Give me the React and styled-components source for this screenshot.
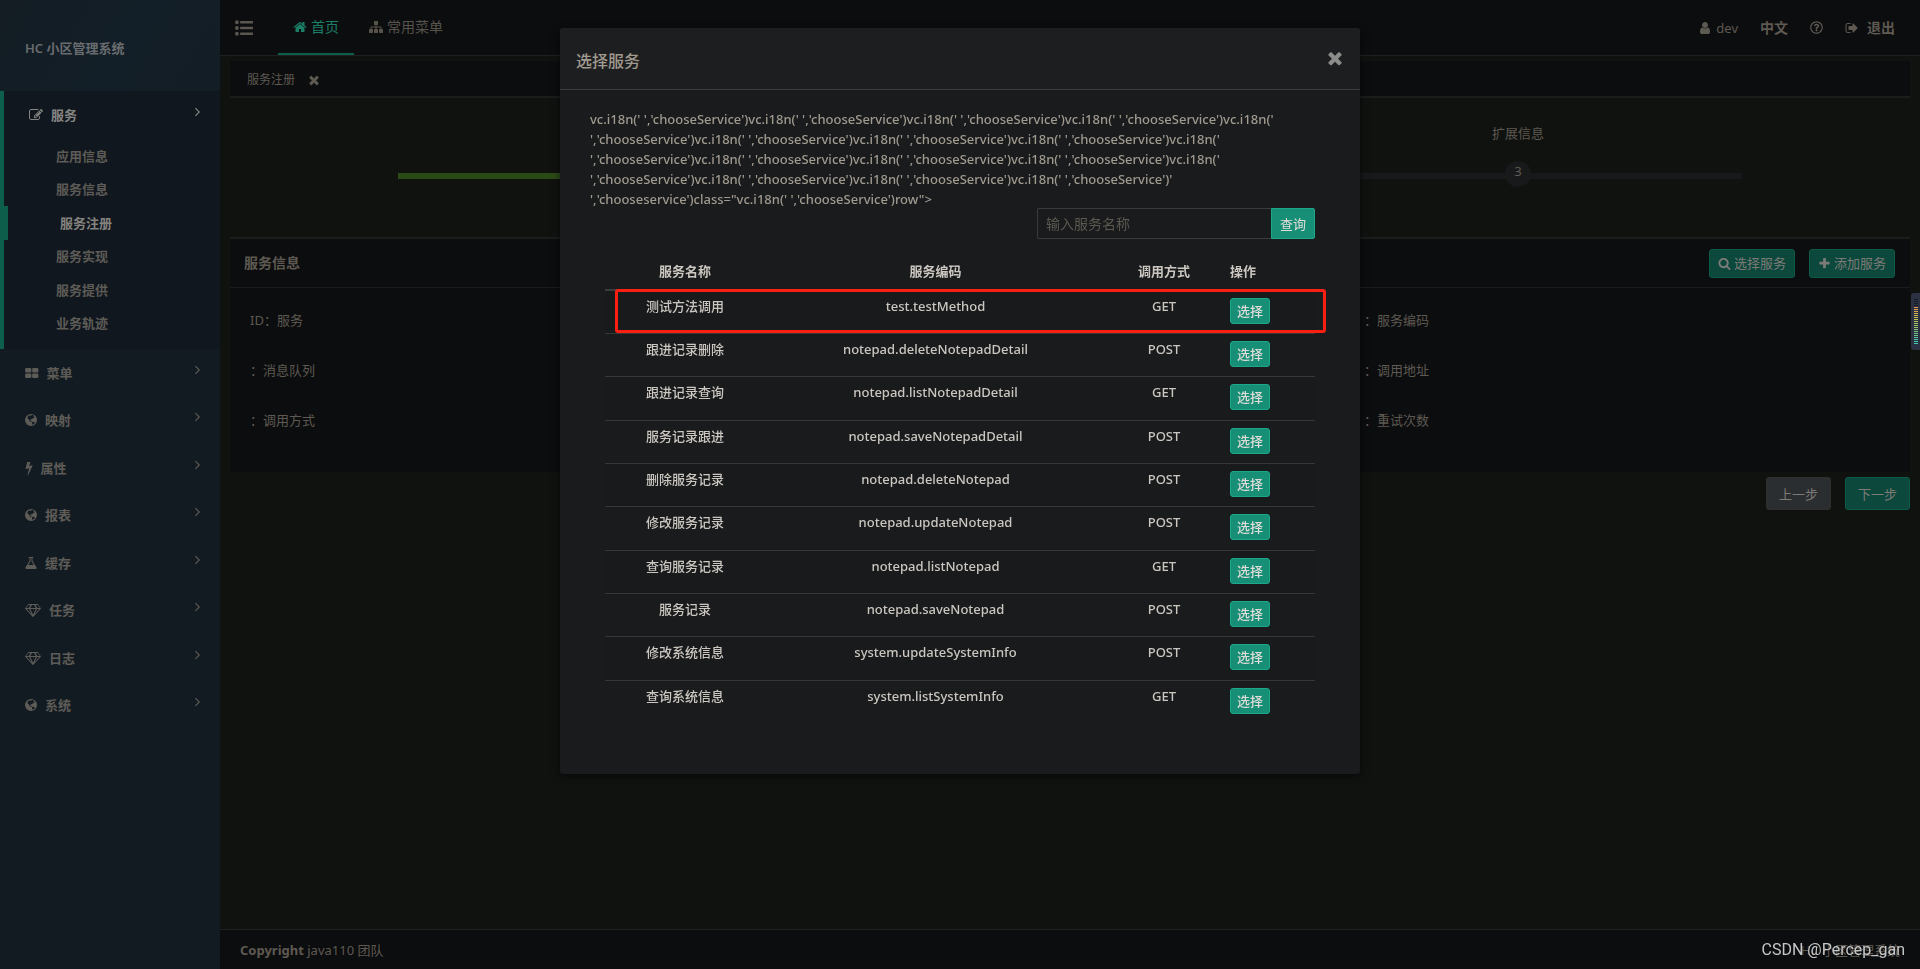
import React from "react";
import styled, { createGlobalStyle, css } from "styled-components";
import { FaRegQuestionCircle } from "react-icons/fa";

const Global = createGlobalStyle`
  *, *::before, *::after { box-sizing: border-box; }
  body {
    margin: 0;
    background: #101210;
    color: #5e5951;
    font: 13px/20px "Noto Sans", "Noto Sans CJK SC", sans-serif;
  }
  button, input { font: inherit; margin: 0; }
  a { color: inherit; text-decoration: none; }
  ul { list-style: none; margin: 0; padding: 0; }
  h1, h2, p { margin: 0; }
`;

const PATHS = {
  home: "M1472 992v480q0 26-19 45t-45 19h-384v-384h-256v384h-384q-26 0-45-19t-19-45v-480q0-1 .5-3t.5-3l575-474 575 474q1 2 1 6zm223-69l-62 74q-8 9-21 11h-3q-13 0-21-7l-692-577-692 577q-12 8-24 7-13-2-21-11l-62-74q-8-10-7-23.5t11-21.5l719-599q32-26 76-26t76 26l244 204v-195q0-14 9-23t23-9h192q14 0 23 9t9 23v408l219 182q10 8 11 21.5t-7 23.5z",
  plus: "M1600 736v192q0 40-28 68t-68 28h-416v416q0 40-28 68t-68 28h-192q-40 0-68-28t-28-68v-416h-416q-40 0-68-28t-28-68v-192q0-40 28-68t68-28h416v-416q0-40 28-68t68-28h192q40 0 68 28t28 68v416h416q40 0 68 28t28 68z",
  times: "M1490 1322q0 40-28 68l-136 136q-28 28-68 28t-68-28l-294-294-294 294q-28 28-68 28t-68-28l-136-136q-28-28-28-68t28-68l294-294-294-294q-28-28-28-68t28-68l136-136q28-28 68-28t68 28l294 294 294-294q28-28 68-28t68 28l136 136q28 28 28 68t-28 68l-294 294 294 294q28 28 28 68z",
  search: "M1216 832q0-185-131.5-316.5t-316.5-131.5-316.5 131.5-131.5 316.5 131.5 316.5 316.5 131.5 316.5-131.5 131.5-316.5zm512 832q0 52-38 90t-90 38q-54 0-90-38l-343-342q-179 124-399 124-143 0-273.5-55.5t-225-150-150-225-55.5-273.5 55.5-273.5 150-225 225-150 273.5-55.5 273.5 55.5 225 150 150 225 55.5 273.5q0 220-124 399l343 343q37 37 37 90z",
  user: "M1536 1399q0 109-62.5 187t-150.5 78h-854q-88 0-150.5-78t-62.5-187q0-85 8.5-160.5t31.5-152 58.5-131 94-89 134.5-34.5q131 128 313 128t313-128q76 0 134.5 34.5t94 89 58.5 131 31.5 152 8.5 160.5zm-256-887q0 159-112.5 271.5t-271.5 112.5-271.5-112.5-112.5-271.5 112.5-271.5 271.5-112.5 271.5 112.5 112.5 271.5z",
  signOut: "M704 1440q0 4 1 20t.5 26.5-3 23.5-10 19.5-20.5 6.5h-320q-119 0-203.5-84.5t-84.5-203.5v-704q0-119 84.5-203.5t203.5-84.5h320q13 0 22.5 9.5t9.5 22.5q0 4 1 20t.5 26.5-3 23.5-10 19.5-20.5 6.5h-320q-66 0-113 47t-47 113v704q0 66 47 113t113 47h312l11.5 1 11.5 3 8 5.5 7 9 2 13.5zm928-544q0 26-19 45l-544 544q-19 19-45 19t-45-19-19-45v-288h-448q-26 0-45-19t-19-45v-384q0-26 19-45t45-19h448v-288q0-26 19-45t45-19 45 19l544 544q19 19 19 45z",
  sitemap: "M1792 1248v320q0 40-28 68t-68 28h-320q-40 0-68-28t-28-68v-320q0-40 28-68t68-28h96v-192h-512v192h96q40 0 68 28t28 68v320q0 40-28 68t-68 28h-320q-40 0-68-28t-28-68v-320q0-40 28-68t68-28h96v-192h-512v192h96q40 0 68 28t28 68v320q0 40-28 68t-68 28h-320q-40 0-68-28t-28-68v-320q0-40 28-68t68-28h96v-192q0-52 38-90t90-38h512v-192h-96q-40 0-68-28t-28-68v-320q0-40 28-68t68-28h320q40 0 68 28t28 68v320q0 40-28 68t-68 28h-96v192h512q52 0 90 38t38 90v192h96q40 0 68 28t28 68z",
  edit: "M888 1184l116-116-152-152-116 116v56h96v96h56zm440-720q-16-16-33 1l-350 350q-17 17-1 33t33-1l350-350q17-17 1-33zm80 594v190q0 119-84.5 203.5t-203.5 84.5h-832q-119 0-203.5-84.5t-84.5-203.5v-832q0-119 84.5-203.5t203.5-84.5h832q63 0 117 25 15 7 18 23 3 17-9 29l-49 49q-14 14-32 8-23-6-45-6h-832q-66 0-113 47t-47 113v832q0 66 47 113t113 47h832q66 0 113-47t47-113v-126q0-13 9-22l64-64q15-15 35-7t20 29zm-96-738l288 288-672 672h-288v-288zm444 132l-92 92-288-288 92-92q28-28 68-28t68 28l152 152q28 28 28 68t-28 68z",
  list: "M0 320a192 192 0 1 0 384 0a192 192 0 1 0-384 0zM0 896a192 192 0 1 0 384 0a192 192 0 1 0-384 0zM0 1472a192 192 0 1 0 384 0a192 192 0 1 0-384 0zM512 190h1280v260h-1280zM512 766h1280v260h-1280zM512 1342h1280v260h-1280z",
  large: "M148 256h540q128 0 128 128v320q0 128-128 128h-540q-128 0-128-128v-320q0-128 128-128zM1044 256h540q128 0 128 128v320q0 128-128 128h-540q-128 0-128-128v-320q0-128 128-128zM148 960h540q128 0 128 128v320q0 128-128 128h-540q-128 0-128-128v-320q0-128 128-128zM1044 960h540q128 0 128 128v320q0 128-128 128h-540q-128 0-128-128v-320q0-128 128-128z",
  globe: "M768 128a768 768 0 1 0 0 1536a768 768 0 1 0 0-1536zM850 240L1010 260L1130 330L1060 400L1160 440L1230 560L1130 600L1010 680L930 760L850 770L790 850L680 820L620 880L700 930L690 1010L830 1040L870 1110L800 1140L640 1080L540 940L480 800L350 700L300 560L390 440L520 330L640 290L700 380L800 330zM960 1110L1180 1150L1270 1250L1200 1350L1060 1440L900 1510L930 1380L880 1250z",
  bolt: "M957 566q18 20 7 44l-540 1157q-13 25-42 25-4 0-14-2-17-5-25.500-19t-4.500-30l197-808-406 101q-4 1-12 1-18 0-31-11-18-15-13-39l201-825q4-14 16-23t28-9h328q19 0 32 12.500t13 29.500q0 8-5 18l-171 463 396-98q8-2 12-2 19 0 34 15z",
  flask: "M1463 1448q56 89 21.500 152.500t-140.500 63.500h-1152q-106 0-140.500-63.500t21.500-152.500l503-793v-399h-64q-26 0-45-19t-19-45 19-45 45-19h512q26 0 45 19t19 45-19 45-45 19h-64v399zm-779-725l-272 429h712l-272-429-20-31v-436h-128v436z",
  diamond: "M212 768l623 665-300-665h-323zM1024 1507l349-739h-698zM486 640l204-384h-262l-288 384zM1213 1433l623-665h-323zM675 640h698l-204-384h-290zM1562 640h346l-288-384h-262zM1645 152l384 512q14 18 13 41.500t-17 40.500l-960 1024q-17 20-41 20t-41-20l-960-1024q-16-17-17-40.500t13-41.500l384-512q18-24 51-24h1140q33 0 51 24z",
  angle: "M150 380L270 260L900 896L270 1532L150 1412L660 896z",
};
const WIDTHS = { globe: 1536, bolt: 970, flask: 1536, diamond: 2048, large: 1728, angle: 960 };

const Svg = styled.svg`
  display: inline-block;
  flex: none;
  fill: currentColor;
  height: ${(p) => p.$size}px;
`;

function Icon({ name, size = 14 }) {
  return (
    <Svg $size={size} viewBox={`0 0 ${WIDTHS[name] || 1792} 1792`} fillRule="evenodd" aria-hidden="true">
      <path d={PATHS[name]} />
    </Svg>
  );
}

const Page = styled.div`
  display: flex;
  min-height: 100vh;
`;

/* Sidebar */
const Sidebar = styled.nav`
  flex: 0 0 220px;
  background: #131b22;
  font-weight: 600;
`;
const Brand = styled.h1`
  height: 91px;
  padding: 38px 25px 0;
  background: linear-gradient(120deg, #131c23, #131f28 55%, #131d25);
  color: #696c6f;
  font-size: 13px;
  line-height: 20px;
  font-weight: 600;
`;
const Section = styled.div`
  padding-bottom: 9px;
  border-left: 4px solid #0e5e4c;
  background: #11171e;
`;
const MenuLink = styled.a`
  display: flex;
  align-items: center;
  gap: 8px;
  height: ${(p) => (p.$active ? "48px" : "100%")};
  padding: 0 20px 0 25px;
  color: ${(p) => (p.$active ? "#858583" : "#5e5c57")};

  span { flex: 1; }
  svg:last-child { margin-bottom: 6px; }
`;
const SubList = styled.ul`
  display: grid;
  grid-template-rows: repeat(6, 1fr);
  height: 201px;
`;
const SubLink = styled.a`
  display: flex;
  align-items: center;
  height: 100%;
  padding-left: 52px;
  color: #5d5b56;
  ${(p) =>
    p.$active &&
    css`
      border-left: 4px solid #0e5e4c;
      color: #85837e;
    `}
`;
const MenuList = styled.ul`
  display: grid;
  grid-template-rows: repeat(8, 1fr);
  height: 380px;
`;

/* Main column */
const Main = styled.div`
  flex: 1;
  min-width: 0;
  display: flex;
  flex-direction: column;
`;
const TopBar = styled.header`
  display: flex;
  height: 56px;
  background: #0c0d0f;
  border-bottom: 1px solid #1f2120;
`;
const MenuToggle = styled.button`
  width: 58px;
  padding: 0 0 0 15px;
  border: 0;
  background: none;
  color: #5a5650;
  text-align: left;
  line-height: 0;
`;
const TopTab = styled.a`
  display: flex;
  align-items: center;
  gap: 4px;
  padding: 0 15px;
  font-size: 14px;
  color: ${(p) => (p.$active ? "#1b7f68" : "#57534b")};
  border-bottom: 2px solid ${(p) => (p.$active ? "#0e5e4c" : "transparent")};
`;
const Account = styled.div`
  display: flex;
  align-items: center;
  margin-left: auto;
  padding-right: 25px;
  gap: 22px;
  a { display: flex; align-items: center; gap: ${(p) => p.$gap || 4}px; }
  strong { font-size: 14px; }
  svg + strong { padding-left: 4px; }
`;
const Content = styled.main`
  flex: 1;
  padding: 5px 10px 0;
`;
const OpenTabs = styled.div`
  display: flex;
  align-items: center;
  gap: 12px;
  height: 37px;
  padding: 2px 17px 0;
  background: #0c0d0f;
  border-bottom: 2px solid #1b1c1c;
  font-size: 12px;
`;
const PlainButton = styled.button`
  display: flex;
  padding: 0;
  border: 0;
  background: none;
  color: inherit;
`;
const Steps = styled.section`
  display: grid;
  grid-template-columns: 1fr 1fr 1fr;
  height: 139px;
  padding: 25px 168px 0;
  text-align: center;
`;
const Step = styled.div`
  display: flex;
  flex-direction: column;
  align-items: center;
  gap: 18px;
  background: linear-gradient(${(p) => (p.$done ? "#2a4b16, #2a4b16" : "#17191a, #17191a")}) 0 50px / 100% 6px no-repeat;

  b {
    width: 26px;
    height: 26px;
    border-radius: 50%;
    background: #17191a;
    font-weight: 400;
  }
`;
const Panel = styled.section`
  height: 235px;
  background: #0c0d0f;
  border-top: 2px solid #1b1c1c;
`;
const PanelHead = styled.header`
  display: flex;
  align-items: center;
  gap: 14px;
  height: 49px;
  padding: 0 15px 0 14px;
  border-bottom: 1px solid #1a1c1d;
  h2 { flex: 1; font-size: 14px; font-weight: 600; }
`;
const Button = styled.button`
  display: inline-flex;
  align-items: center;
  justify-content: center;
  gap: 3px;
  height: ${(p) => p.$height || 29}px;
  padding: 0 ${(p) => p.$pad || 8}px;
  border: 1px solid ${(p) => (p.$muted ? "#302f2d" : "#0e5a49")};
  border-radius: 3px;
  background: ${(p) => (p.$muted ? "#2b2e30" : "#0c483c")};
  color: #7c7b78;
  font-size: 13px;
  line-height: 18px;
  white-space: nowrap;
`;
const Fields = styled.div`
  display: grid;
  grid-template-columns: 1fr 1fr 1fr;
  grid-auto-rows: 50px;
  column-gap: 11px;
  padding: 22px 0 0 20px;
`;
const Actions = styled.div`
  display: flex;
  justify-content: flex-end;
  gap: 14px;
  padding-top: 5px;
`;
const Footer = styled.footer`
  display: flex;
  justify-content: space-between;
  height: 40px;
  padding: 10px 20px 0;
  background: #0c0d0f;
  border-top: 1px solid #1f2220;
`;

/* Dialog */
const Overlay = styled.div`
  position: fixed;
  inset: 0;
  display: flex;
  justify-content: center;
  align-items: flex-start;
  padding-top: 28px;
`;
const Dialog = styled.section`
  width: 800px;
  padding-bottom: 51px;
  border-radius: 3px;
  background: #1a1b1d;
  box-shadow: 0 2px 8px rgba(0, 0, 0, 0.6);
  color: #a09a8f;
`;
const DialogHead = styled.header`
  display: flex;
  justify-content: space-between;
  height: 62px;
  padding: 20px 15px 0 16px;
  background: #1d1e20;
  border-bottom: 1px solid #383c3e;
  border-radius: 3px 3px 0 0;
  h2 { font-size: 16px; line-height: 26px; font-weight: 500; }
`;
const CloseButton = styled(PlainButton)`
  height: 20px;
  color: #8b8b8a;
`;
const Message = styled.p`
  height: 118px;
  padding: 19px 30px 0;
  font-weight: 500;
  line-height: 20px;
  white-space: pre-line;
`;
const SearchRow = styled.form`
  display: flex;
  justify-content: flex-end;
  padding: 0 45px;
`;
const SearchInput = styled.input`
  width: 234px;
  height: 31px;
  padding: 0 8px;
  border: 1px solid #383c3e;
  border-right: 0;
  border-radius: 2px 0 0 2px;
  background: #1a1b1d;
  color: #a09a8f;
  font-size: 14px;
  &::placeholder { color: #5b5850; opacity: 1; }
`;
const Accent = styled(Button)`
  background: #178e76;
  border-color: #1aa98b;
  color: #e0ddd8;
`;
const SearchButton = styled(Accent)`
  border-radius: 0 2px 2px 0;
`;
const Table = styled.table`
  width: 710px;
  margin: 10px 45px 0;
  border-collapse: collapse;
  table-layout: fixed;
  color: #cbc7c0;

  th, td {
    padding: 5px 8px;
    text-align: center;
    vertical-align: top;
    font-weight: 500;
  }
  th { height: 41px; padding-top: 12px; font-weight: 600; border-bottom: 2px solid #383c3e; }
  td { height: 43px; border-top: 1px solid #343839; }
  tr:nth-child(3n) td { height: 44px; }
  th:last-child, td:last-child { text-align: left; }
  td:last-child { padding: 7px 8px 0; line-height: 0; }
  tbody tr:nth-child(odd) { background: #191a1c; }
`;
const Highlight = styled.div`
  position: absolute;
  top: 289px;
  left: 50%;
  width: 711px;
  height: 44px;
  margin-left: -345px;
  border: 3px solid #fb1e12;
  border-radius: 3px;
  pointer-events: none;
`;
const Gauge = styled.div`
  position: fixed;
  right: 0;
  top: 293px;
  width: 9px;
  height: 57px;
  padding: 6px 2px 6px 3px;
  background: #2b3042;
  border-radius: 3px 0 0 3px;
  div {
    height: 45px;
    background:
      repeating-linear-gradient(transparent 0 1px, #2b3042 1px 2px),
      linear-gradient(#161a26 0 8px, #e8964f 8px, #cfc24f 18px, #8fc66a 29px, #3cc8b4 45px);
  }
`;
const Watermark = styled.div`
  position: fixed;
  right: 15px;
  bottom: 9px;
  color: #c5c6c6;
  font: 16px/20px Roboto, sans-serif;
`;

const SUBMENU = ["应用信息", "服务信息", "服务注册", "服务实现", "服务提供", "业务轨迹"];
const MENU = [
  ["large", "菜单"],
  ["globe", "映射"],
  ["bolt", "属性"],
  ["globe", "报表"],
  ["flask", "缓存"],
  ["diamond", "任务"],
  ["diamond", "日志"],
  ["globe", "系统"],
];
const FIELDS = ["ID：服务", "", "：服务编码", "：消息队列", "", "：调用地址", "：调用方式", "", "：重试次数"];
const ROWS = [
  ["测试方法调用", "test.testMethod", "GET"],
  ["跟进记录删除", "notepad.deleteNotepadDetail", "POST"],
  ["跟进记录查询", "notepad.listNotepadDetail", "GET"],
  ["服务记录跟进", "notepad.saveNotepadDetail", "POST"],
  ["删除服务记录", "notepad.deleteNotepad", "POST"],
  ["修改服务记录", "notepad.updateNotepad", "POST"],
  ["查询服务记录", "notepad.listNotepad", "GET"],
  ["服务记录", "notepad.saveNotepad", "POST"],
  ["修改系统信息", "system.updateSystemInfo", "POST"],
  ["查询系统信息", "system.listSystemInfo", "GET"],
];
const OPEN = "vc.i18n('";
const CALL = OPEN + " ','chooseService')";
const TAIL = "','chooseService')";
const MESSAGE = [
  CALL.repeat(4) + OPEN,
  TAIL + CALL.repeat(3) + OPEN,
  TAIL + CALL.repeat(3) + OPEN,
  TAIL + CALL.repeat(3) + "'",
  `','chooseservice')class="${CALL}row">`,
].join("\n");

export default function App() {
  return (
    <>
      <Global />
      <Page>
        <Sidebar>
          <Brand>HC 小区管理系统</Brand>
          <Section>
            <MenuLink href="#" $active>
              <Icon name="edit" />
              <span>服务</span>
              <Icon name="angle" size={12} />
            </MenuLink>
            <SubList>
              {SUBMENU.map((label) => (
                <li key={label}>
                  <SubLink href="#" $active={label === "服务注册"}>{label}</SubLink>
                </li>
              ))}
            </SubList>
          </Section>
          <MenuList>
            {MENU.map(([icon, label]) => (
              <li key={label}>
                <MenuLink href="#">
                  <Icon name={icon} />
                  <span>{label}</span>
                  <Icon name="angle" size={12} />
                </MenuLink>
              </li>
            ))}
          </MenuList>
        </Sidebar>
        <Main>
          <TopBar>
            <MenuToggle aria-label="菜单"><Icon name="list" size={18} /></MenuToggle>
            <TopTab href="#" $active><Icon name="home" />首页</TopTab>
            <TopTab href="#"><Icon name="sitemap" />常用菜单</TopTab>
            <Account>
              <a href="#"><Icon name="user" />dev</a>
              <a href="#"><strong>中文</strong></a>
              <a href="#" aria-label="帮助"><FaRegQuestionCircle size={13} /></a>
              <a href="#"><Icon name="signOut" /><strong>退出</strong></a>
            </Account>
          </TopBar>
          <Content>
            <OpenTabs>
              服务注册
              <PlainButton aria-label="关闭标签"><Icon name="times" size={14} /></PlainButton>
            </OpenTabs>
            <Steps>
              <Step $done />
              <Step />
              <Step>扩展信息<b>3</b></Step>
            </Steps>
            <Panel>
              <PanelHead>
                <h2>服务信息</h2>
                <Button><Icon name="search" size={13} />选择服务</Button>
                <Button><Icon name="plus" size={13} />添加服务</Button>
              </PanelHead>
              <Fields>
                {FIELDS.map((label, i) => <div key={i}>{label}</div>)}
              </Fields>
            </Panel>
            <Actions>
              <Button $muted $height={33} $pad={12}>上一步</Button>
              <Button $height={33} $pad={12}>下一步</Button>
            </Actions>
          </Content>
          <Footer>
            <div><strong>Copyright</strong> java110 团队</div>
            <div>HC 小区管理系统</div>
          </Footer>
        </Main>
      </Page>
      <Overlay>
        <Dialog role="dialog" aria-label="选择服务">
          <DialogHead>
            <h2>选择服务</h2>
            <CloseButton aria-label="关闭"><Icon name="times" size={20} /></CloseButton>
          </DialogHead>
          <Message>{MESSAGE}</Message>
          <SearchRow onSubmit={(e) => e.preventDefault()}>
            <SearchInput aria-label="服务名称" placeholder="输入服务名称" />
            <SearchButton $height={31}>查询</SearchButton>
          </SearchRow>
          <Table>
            <colgroup>
              <col width="160" />
              <col width="341" />
              <col width="116" />
              <col width="93" />
            </colgroup>
            <thead>
              <tr><th>服务名称</th><th>服务编码</th><th>调用方式</th><th>操作</th></tr>
            </thead>
            <tbody>
              {ROWS.map(([name, code, method]) => (
                <tr key={code}>
                  <td>{name}</td>
                  <td>{code}</td>
                  <td>{method}</td>
                  <td><Accent $height={26} $pad={6}>选择</Accent></td>
                </tr>
              ))}
            </tbody>
          </Table>
        </Dialog>
        <Highlight />
      </Overlay>
      <Gauge><div /></Gauge>
      <Watermark>CSDN @Percep_gan</Watermark>
    </>
  );
}
